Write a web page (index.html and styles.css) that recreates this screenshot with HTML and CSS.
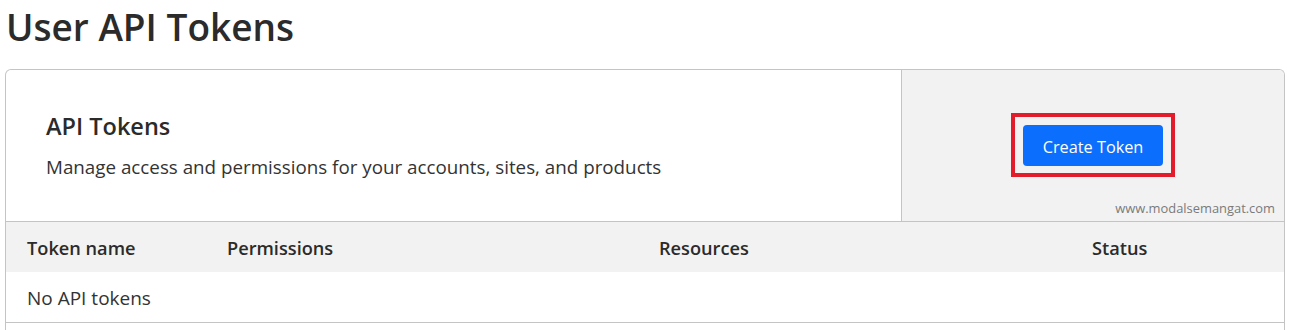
FILE: index.html
```html
<!DOCTYPE html>
<html>
<head>
<meta charset="utf-8">
<link rel="stylesheet" href="styles.css">
</head>
<body>
<h1 class="page-title">User API Tokens</h1>
<div class="card">
  <div class="card-top">
    <div class="intro">
      <h2 class="intro-title">API Tokens</h2>
      <p class="intro-desc">Manage access and permissions for your accounts, sites, and products</p>
    </div>
    <div class="action">
      <div class="highlight">
        <button class="btn-primary">Create Token</button>
      </div>
      <span class="watermark">www.modalsemangat.com</span>
    </div>
  </div>
  <div class="table">
    <div class="row head">
      <div class="cell">Token name</div>
      <div class="cell">Permissions</div>
      <div class="cell">Resources</div>
      <div class="cell">Status</div>
    </div>
    <div class="row body">
      <div class="cell">No API tokens</div>
    </div>
  </div>
</div>
</body>
</html>
```
FILE: styles.css
```css
html, body {
  margin: 0;
  padding: 0;
  background: #fff;
}
body {
  font-family: "Open Sans", "Noto Sans", sans-serif;
  color: #2d2d2d;
  padding: 0 7px 0 5px;
}
.page-title {
  margin: 0;
  padding: 2px 0 0 1px;
  height: 69px;
  box-sizing: border-box;
  font-size: 37px;
  font-weight: 600;
  line-height: 50px;
  color: #2b2b2b;
}
.card {
  border: 1px solid #c4c4c4;
  border-radius: 6px 6px 0 0;
  border-bottom: none;
  height: 270px;
  box-sizing: border-box;
  overflow: hidden;
}
.card-top {
  display: grid;
  grid-template-columns: 895px 1fr;
  height: 151px;
  border-bottom: 1px solid #c4c4c4;
}
.intro {
  padding: 38px 0 0 40px;
}
.intro-title {
  margin: 0;
  font-size: 23.5px;
  font-weight: 600;
  line-height: 36px;
  color: #2b2b2b;
}
.intro-desc {
  margin: 10px 0 0;
  font-size: 18.8px;
  line-height: 26px;
  color: #333;
}
.action {
  background: #f2f2f2;
  border-left: 1px solid #c4c4c4;
  position: relative;
  display: flex;
  justify-content: center;
  align-items: flex-start;
  padding-top: 43px;
}
.highlight {
  border: 4px solid #e21c2a;
  padding: 8px 8px 7px 8px;
}
.btn-primary {
  display: block;
  width: 140px;
  height: 41px;
  border: none;
  border-radius: 4px;
  background: #0b6efd;
  color: #fff;
  font-family: "Open Sans", "Noto Sans", sans-serif;
  font-size: 16.3px;
  padding: 2px 0 0;
}
.watermark {
  position: absolute;
  right: 9px;
  bottom: 4px;
  font-size: 12.9px;
  color: #7a7a7a;
}
.row {
  display: grid;
  grid-template-columns: 200px 432px 433px 1fr;
  padding-left: 21px;
  align-items: center;
}
.row.head {
  background: #f2f2f2;
  height: 50px;
  font-weight: 600;
  font-size: 18.2px;
  color: #2b2b2b;
  padding-top: 2px;
  box-sizing: border-box;
}
.row.body {
  height: 51px;
  box-sizing: border-box;
  border-bottom: 1px solid #c4c4c4;
  font-size: 19px;
  color: #333;
  padding-top: 2px;
}
```
